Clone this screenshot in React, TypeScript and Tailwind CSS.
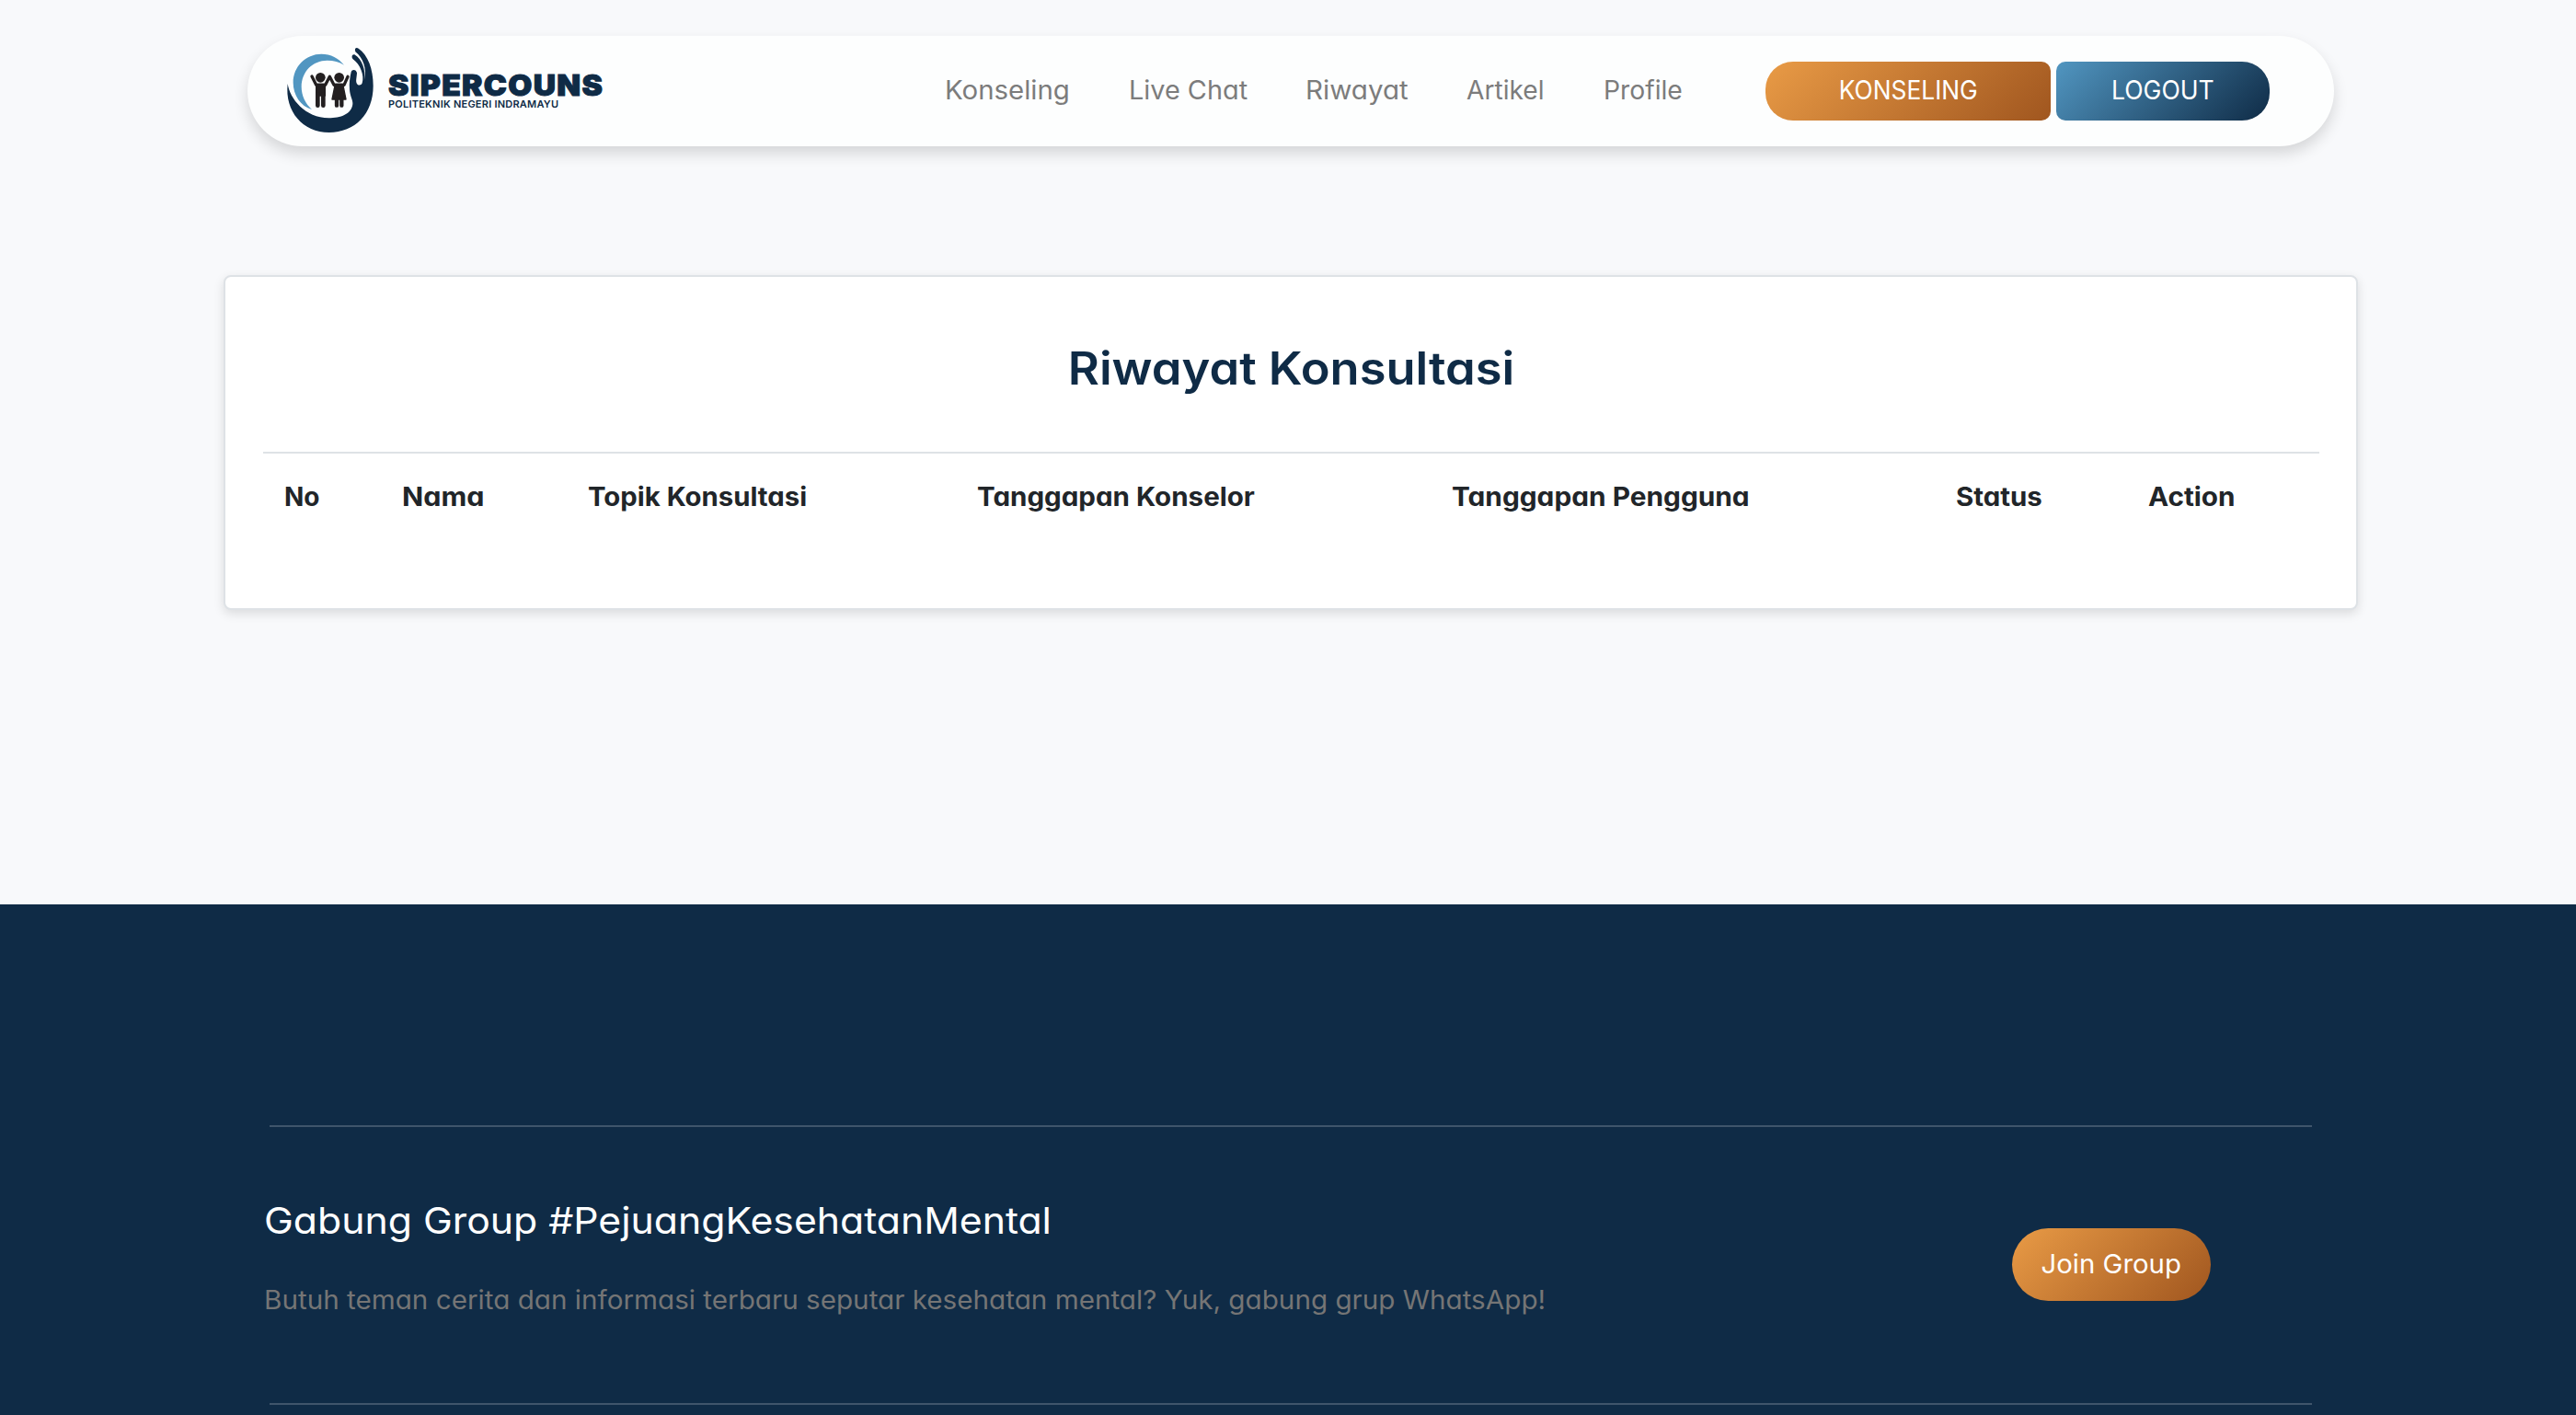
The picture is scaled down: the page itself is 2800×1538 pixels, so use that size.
import React from "react";

const navLinks = [
  { label: "Konseling", cell: "w-[200px]", text: "scale-x-[1.05]" },
  { label: "Live Chat", cell: "w-[192px]", text: "scale-x-[1.03]" },
  { label: "Riwayat", cell: "w-[175px]", text: "scale-x-[1.055]" },
  { label: "Artikel", cell: "w-[149px]", text: "scale-x-[1.005]" },
  { label: "Profile", cell: "w-[176px]", text: "scale-x-[1.01]" },
];

const columns = [
  { label: "No", cell: "w-[128px]", text: "scale-x-[1]" },
  { label: "Nama", cell: "w-[202px]", text: "scale-x-[1.088]" },
  { label: "Topik Konsultasi", cell: "w-[423px]", text: "scale-x-[1.047]" },
  { label: "Tanggapan Konselor", cell: "w-[516px]", text: "scale-x-[1.055]" },
  { label: "Tanggapan Pengguna", cell: "w-[548px]", text: "scale-x-[1.065]" },
  { label: "Status", cell: "w-[209px]", text: "scale-x-[1.05]" },
  { label: "Action", cell: "w-[184px]", text: "scale-x-[1.06]" },
];

function Emblem() {
  return (
    <svg viewBox="0 0 360 315" className="h-[105px] w-[120px] shrink-0" aria-hidden="true">
      <path
        fill="#5196c1"
        d="M222 80C205 58 178 44 148 44C97 44 56 85 56 137C56 178 80 214 117 225C96 207 83 180 83 151C83 101 120 65 167 65C188 65 207 70 222 80Z"
      />
      <path
        fill="#0f2b46"
        d="M38 141C45 190 95 252 172 253C210 253 247 240 250 207C251 196 241 180 240 160C238 140 241 120 245 103C248 92 262 94 264 106C263 122 259 134 264 141C268 148 278 147 281 139C289 115 275 78 251 61C245 54 248 44 256 46C282 62 292 96 289 128C296 92 285 58 259 37C255 28 260 21 269 26C300 48 317 92 317 148C317 240 258 300 173 300C88 300 28 232 38 141Z"
      />
      <g fill="#231f20" stroke="#231f20" strokeLinecap="round" strokeLinejoin="round">
        <circle cx="145" cy="121" r="16" stroke="none" />
        <circle cx="206" cy="121" r="16" stroke="none" />
        <path fill="none" strokeWidth="10" d="M117 117L131 145H161L175 118L189 145H222L234 118" />
        <path strokeWidth="4" d="M131 142H160V180H131Z" />
        <path fill="none" strokeWidth="14" d="M136 175V212M154 175V212" />
        <path strokeWidth="4" d="M193 142H218L228 192H183Z" />
        <path fill="none" strokeWidth="13" d="M198 190V212M214 190V212" />
      </g>
    </svg>
  );
}

function Logo() {
  return (
    <div className="flex h-full w-[700px] shrink-0 pl-[31px] pt-[5px]">
      <Emblem />
      <div className="pt-[33px] pl-0.5 text-[#0f2b46]">
        <div className="w-max origin-left scale-x-[1.085] text-[31px] leading-8 font-black tracking-[1.2px] [-webkit-text-stroke:1px_#0f2b46]">
          SIPERCOUNS
        </div>
        <div className="-mt-0.5 w-max text-[11px] leading-3 font-semibold tracking-[0.23px]">
          POLITEKNIK NEGERI INDRAMAYU
        </div>
      </div>
    </div>
  );
}

export default function App() {
  return (
    <div className="flex h-[1538px] w-[2800px] flex-col overflow-hidden bg-[#f8f9fb] font-['Inter',sans-serif] [font-feature-settings:'cv11']">
      <header className="mt-[39px] ml-[269px] flex h-[120px] w-[2268px] shrink-0 items-center rounded-full bg-[#fdfefe] shadow-[0_8px_16px_rgba(0,0,0,0.14)]">
        <Logo />
        <nav className="ml-[58px] flex shrink-0 pb-0.5 text-[28px] leading-[42px] text-[#7c7c7c]">
          {navLinks.map((l) => (
            <a key={l.label} className={`block whitespace-nowrap ${l.cell}`}>
              <span className={`inline-block origin-left ${l.text}`}>{l.label}</span>
            </a>
          ))}
        </nav>
        <div className="flex gap-1.5 text-[28px] text-white">
          <button className="h-16 w-[310px] rounded-l-[30px] rounded-r-[10px] bg-[linear-gradient(135deg,#e99b46,#a0561f)] pb-0.5">
            <span className="inline-block scale-x-[0.94]">KONSELING</span>
          </button>
          <button className="h-16 w-[232px] rounded-l-[10px] rounded-r-[30px] bg-[linear-gradient(135deg,#5196c1,#0f2b46)] pb-0.5">
            <span className="inline-block scale-x-[0.95]">LOGOUT</span>
          </button>
        </div>
      </header>

      <main className="mt-[140px] ml-[243px] h-[364px] w-[2320px] shrink-0 rounded-lg border-2 border-[#dee2e6] bg-white pr-10 pl-[41px] shadow-[0_4px_12px_rgba(0,0,0,0.12)]">
        <h1 className="mt-[70px] scale-x-[1.07] text-center text-[49px] leading-[60px] font-semibold text-[#0f2b46]">
          Riwayat Konsultasi
        </h1>
        <div className="mt-[60px] flex border-t-2 border-[#dee2e6] pt-[26px] pl-[23px] text-[28px] leading-[42px] font-bold text-[#212529]">
          {columns.map((c) => (
            <div key={c.label} className={`shrink-0 whitespace-nowrap ${c.cell}`}>
              <span className={`inline-block origin-left ${c.text}`}>{c.label}</span>
            </div>
          ))}
        </div>
      </main>

      <footer className="mt-[320px] flex-1 bg-[#0f2b46] pl-[287px]">
        <div className="mt-[240px] ml-1.5 h-0.5 w-[2220px] bg-[#3f556b]" />
        <div className="flex h-[300px] pt-[72px]">
          <div className="w-[1900px]">
            <h2 className="w-max origin-left scale-x-[1.068] text-[40px] leading-[60px] text-white">
              Gabung Group #PejuangKesehatanMental
            </h2>
            <p className="mt-[35px] w-max origin-left scale-x-[1.059] text-[28px] leading-[42px] text-[#757575]">
              Butuh teman cerita dan informasi terbaru seputar kesehatan mental? Yuk, gabung grup WhatsApp!
            </p>
          </div>
          <button className="mt-[38px] h-[79px] w-[216px] rounded-full bg-[linear-gradient(135deg,#e99b46,#a0561f)] pb-0.5 text-[28px] text-white">
            <span className="inline-block scale-x-[1.048]">Join Group</span>
          </button>
        </div>
        <div className="ml-1.5 h-0.5 w-[2220px] bg-[#3f556b]" />
      </footer>
    </div>
  );
}
